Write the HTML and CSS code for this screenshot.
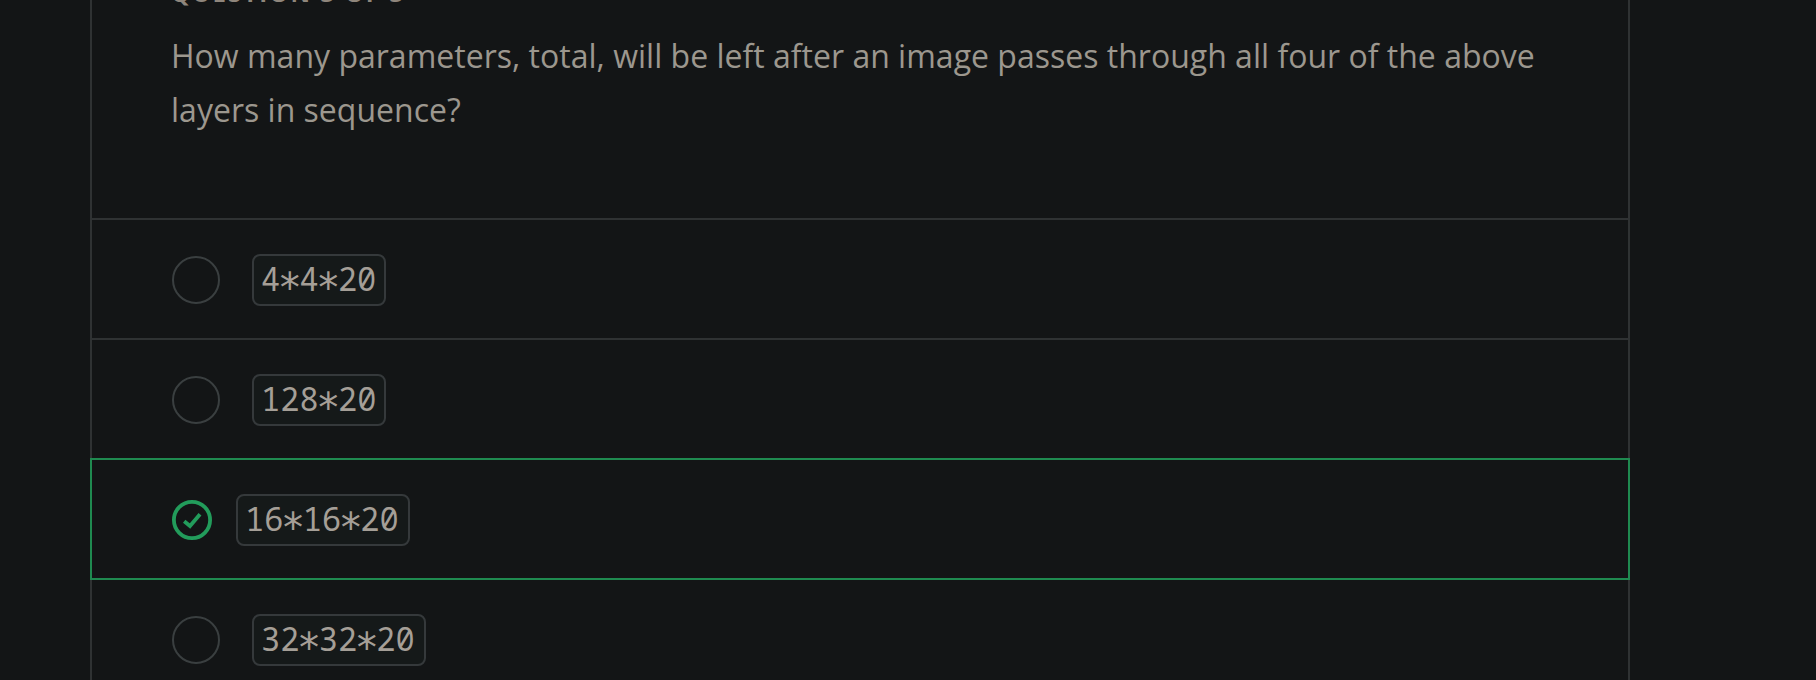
FILE: index.html
```html
<!DOCTYPE html>
<html lang="en">
<head>
<meta charset="utf-8">
<title>Quiz question</title>
<link rel="stylesheet" href="styles.css">
</head>
<body>
<main class="quiz">
  <header class="quiz-head">
    <h2 class="quiz-count">QUESTION 3 OF 3</h2>
    <p class="quiz-text">How many parameters, total, will be left after an image passes through all four of the above layers in sequence?</p>
  </header>
  <ul class="options">
    <li class="option"><span class="radio"></span><code class="code">4<span class="op">*</span>4<span class="op">*</span>20</code></li>
    <li class="option"><span class="radio"></span><code class="code">128<span class="op">*</span>20</code></li>
    <li class="option option-correct">
      <svg class="check" viewBox="0 0 40 40"><circle cx="20" cy="20" r="18.1"/><path d="M12.2 21.2 L18 26 L28 14.2"/></svg>
      <code class="code code-long">16<span class="op">*</span>16<span class="op">*</span>20</code>
    </li>
    <li class="option option-last"><span class="radio"></span><code class="code code-long">32<span class="op">*</span>32<span class="op">*</span>20</code></li>
  </ul>
</main>
</body>
</html>
```
FILE: styles.css
```css
* { box-sizing: border-box; }
body {
  margin: 0;
  height: 680px;
  overflow: hidden;
  background: #131516;
  font-family: "Open Sans", sans-serif;
}
.quiz {
  display: flow-root;
  width: 1540px;
  height: 680px;
  margin-left: 90px;
  border: solid #2f3233;
  border-width: 0 2px;
}
.quiz-head {
  display: flow-root;
  height: 218px;
  padding: 0 80px 0 79px;
}
.quiz-count {
  margin: -24px 0 0;
  font-size: 24px;
  font-weight: 700;
  line-height: 34px;
  letter-spacing: 2.1px;
  color: #8f867c;
}
.quiz-text {
  margin: 19px 0 0;
  font-size: 32px;
  line-height: 54px;
  letter-spacing: 0.008px;
  color: #9c978e;
}
.options {
  margin: 0;
  padding: 0;
  list-style: none;
}
.option {
  display: flex;
  align-items: center;
  height: 120px;
  padding: 2px 80px 0;
  border-top: 2px solid #2f3233;
}
.option-correct {
  height: 122px;
  margin: 0 -2px -2px;
  border: 2px solid #1f8a50;
}
.option-last {
  align-items: flex-start;
  height: 102px;
  padding-top: 34px;
  border-top-color: transparent;
}
.option-last .radio { margin-top: 2px; }
.radio {
  width: 48px;
  height: 48px;
  margin-right: 32px;
  border: 2px solid #3a3f40;
  border-radius: 50%;
}
.check {
  width: 40px;
  height: 40px;
  margin-right: 24px;
  fill: none;
  stroke: #229c5b;
  stroke-width: 3.8;
}
.code {
  height: 52px;
  padding: 0 7.4px 0 7px;
  border: 2px solid #35393b;
  border-radius: 8px;
  background: #151919;
  font-family: "Noto Sans Mono", "DejaVu Sans Mono", monospace;
  font-size: 32px;
  line-height: 45px;
  letter-spacing: 0.04px;
  color: #a59f97;
}
.code-long { padding-right: 9px; }
.op {
  display: inline-block;
  width: 19.2px;
  height: 20px;
  font-family: "DejaVu Sans Mono", monospace;
  font-size: 40px;
  line-height: 20px;
  text-indent: -2.4px;
  vertical-align: -10.5px;
}
```
